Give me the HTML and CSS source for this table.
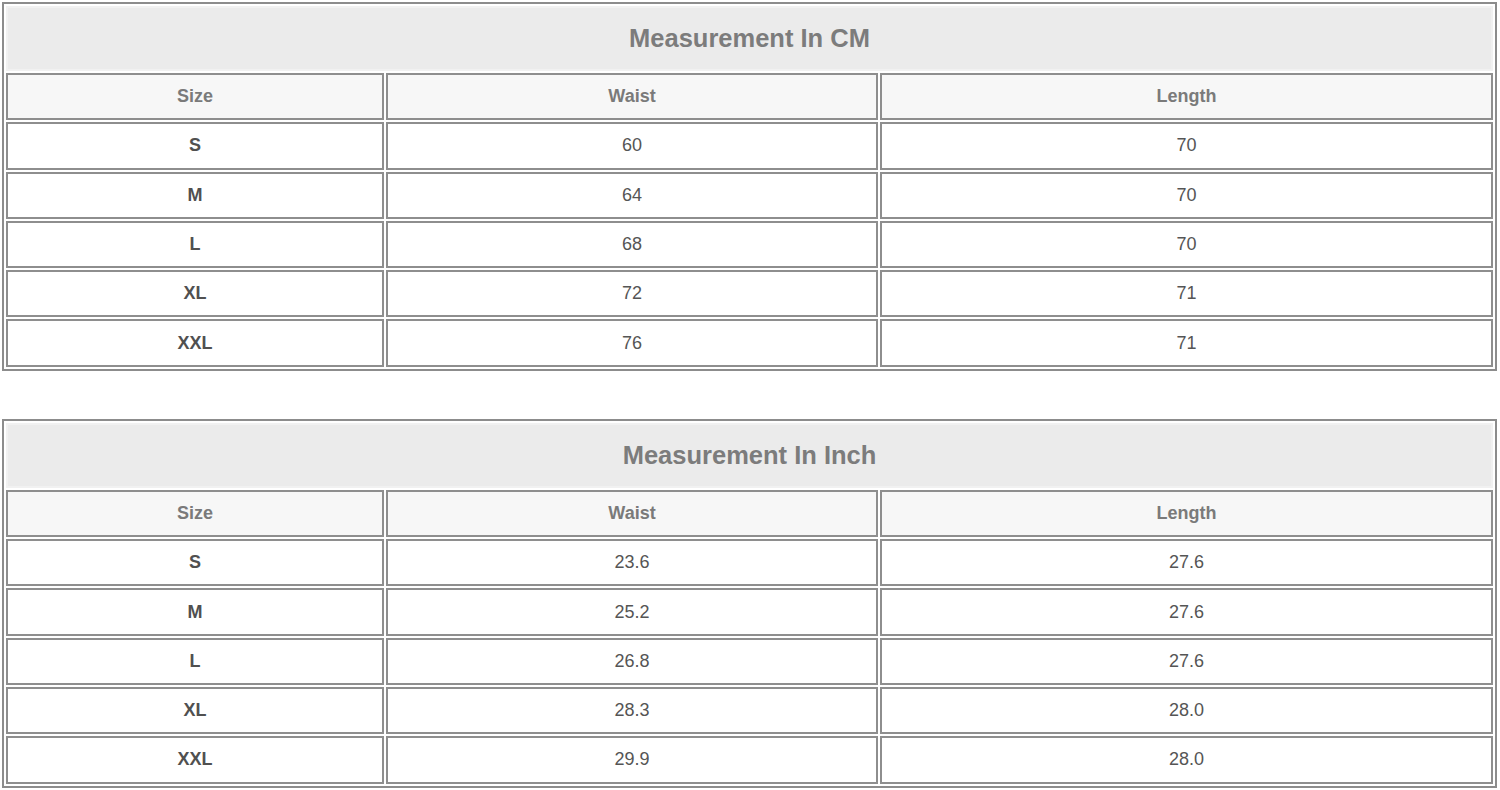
FILE: index.html
```html
<!DOCTYPE html>
<html>
<head>
<meta charset="utf-8">
<link rel="stylesheet" href="styles.css">
</head>
<body>
<div class="page">
  <table class="size-table">
    <colgroup><col class="c1"><col class="c2"><col class="c3"></colgroup>
    <thead>
      <tr><th class="title" colspan="3">Measurement In CM</th></tr>
      <tr><th class="hd">Size</th><th class="hd">Waist</th><th class="hd">Length</th></tr>
    </thead>
    <tbody>
      <tr><td class="sz">S</td><td>60</td><td>70</td></tr>
      <tr><td class="sz">M</td><td>64</td><td>70</td></tr>
      <tr><td class="sz">L</td><td>68</td><td>70</td></tr>
      <tr><td class="sz">XL</td><td>72</td><td>71</td></tr>
      <tr><td class="sz">XXL</td><td>76</td><td>71</td></tr>
    </tbody>
  </table>

  <table class="size-table">
    <colgroup><col class="c1"><col class="c2"><col class="c3"></colgroup>
    <thead>
      <tr><th class="title" colspan="3">Measurement In Inch</th></tr>
      <tr><th class="hd">Size</th><th class="hd">Waist</th><th class="hd">Length</th></tr>
    </thead>
    <tbody>
      <tr><td class="sz">S</td><td>23.6</td><td>27.6</td></tr>
      <tr><td class="sz">M</td><td>25.2</td><td>27.6</td></tr>
      <tr><td class="sz">L</td><td>26.8</td><td>27.6</td></tr>
      <tr><td class="sz">XL</td><td>28.3</td><td>28.0</td></tr>
      <tr><td class="sz">XXL</td><td>29.9</td><td>28.0</td></tr>
    </tbody>
  </table>
</div>
</body>
</html>
```
FILE: styles.css
```css
html, body {
  margin: 0;
  padding: 0;
  background: #ffffff;
}

.page {
  padding: 2px 0 0 2px;
  display: flex;
  flex-direction: column;
  gap: 48px;
  font-family: "Liberation Sans", Arial, sans-serif;
}

.size-table {
  width: 1495px;
  table-layout: fixed;
  border-collapse: separate;
  border-spacing: 2px;
  border: 2px solid #8c8c8c;
  background: #ffffff;
}

.size-table .c1 { width: 378px; }
.size-table .c2 { width: 492px; }
.size-table .c3 { width: 613px; }

.size-table th,
.size-table td {
  padding: 0;
  text-align: center;
  vertical-align: middle;
  border: 2px solid #8e8e8e;
  height: 43.3px;
  box-sizing: content-box;
}

.size-table .title {
  height: 61px;
  background: #ebebeb;
  border-color: #f1f1f1;
  color: #7c7c7c;
  font-size: 25.5px;
  font-weight: bold;
}

.size-table .hd {
  background: #f7f7f7;
  color: #7a7a7a;
  font-size: 18px;
  font-weight: bold;
}

.size-table td {
  color: #555555;
  font-size: 18px;
}

.size-table td.sz {
  font-weight: bold;
  color: #505050;
}
```
